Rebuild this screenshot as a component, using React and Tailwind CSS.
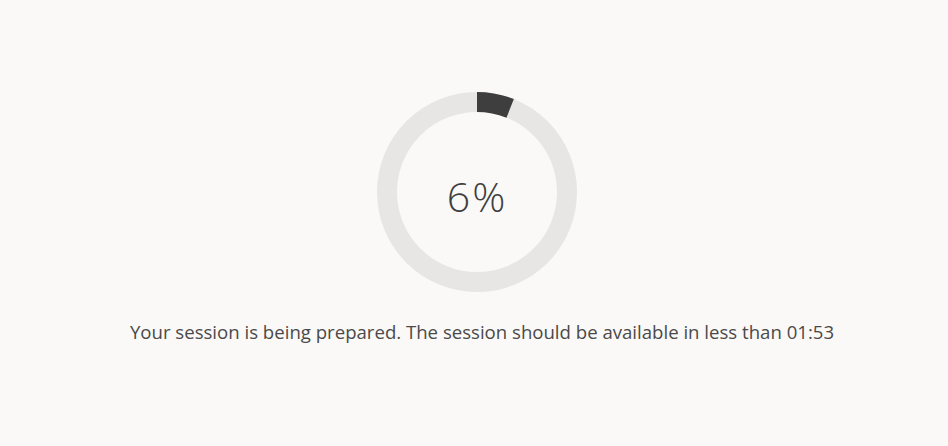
import React from 'react';

const Progress = ({ value }) => {
    const r = 90;
    const c = 2 * Math.PI * r;
    return (
        <div className="relative w-[200px] h-[200px]">
            <svg width="200" height="200" viewBox="0 0 200 200" className="-rotate-90">
                <circle cx="100" cy="100" r={r} fill="none" stroke="#e7e6e4" strokeWidth="20" />
                <circle cx="100" cy="100" r={r} fill="none" stroke="#3e3e3e" strokeWidth="20" strokeDasharray={`${(c * value) / 100} ${c}`} />
            </svg>
            <div className="absolute inset-0 flex items-center justify-center pt-[9px] text-[41px] tracking-[2px] font-light text-[#3f3f3f] leading-none">
                {value}%
            </div>
        </div>
    );
};

export default function App() {
    return (
        <div className="min-h-screen w-full bg-[#faf9f7] font-['Open_Sans',sans-serif] flex flex-col items-center pt-[92px] pl-[6px]">
            <Progress value={6} />
            <p className="mt-[31px] pl-[10px] text-[18.6px] text-[#4a4a4a] leading-none">
                Your session is being prepared. The session should be available in less than 01:53
            </p>
        </div>
    );
}
